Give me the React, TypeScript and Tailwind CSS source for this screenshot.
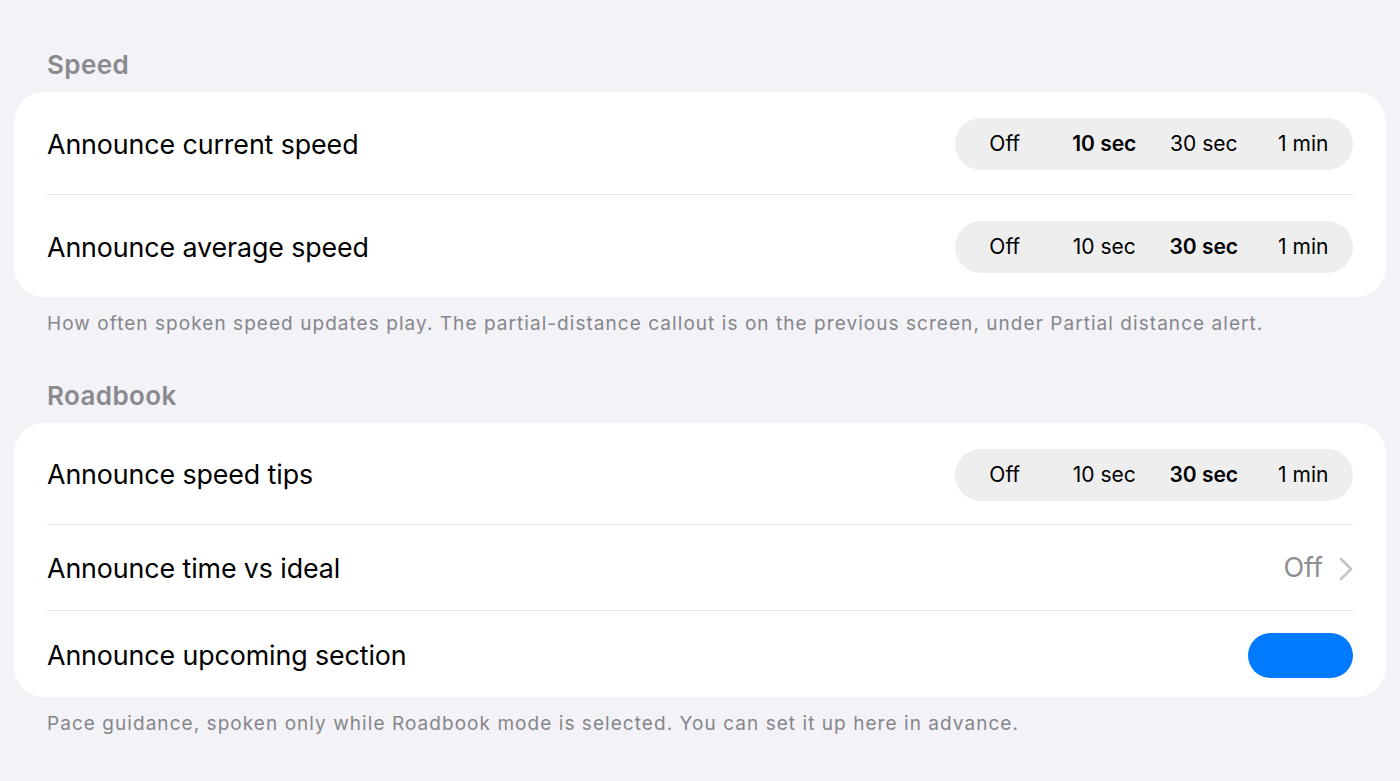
const font = { fontFamily: 'Inter, "Liberation Sans", sans-serif' };

function Segmented({ selected }: { selected: number }) {
    const options = ['Off', '10 sec', '30 sec', '1 min'];
    return (
        <div className="flex w-[398px] h-[52px] rounded-full bg-[#eeeeef] items-center">
            {options.map((o, i) => (
                <div
                    key={o}
                    className={`flex-1 text-center text-[21px] text-black ${i === selected ? 'font-semibold' : 'font-normal'}`}
                >
                    {o}
                </div>
            ))}
        </div>
    );
}

function Row({ label, children, height, last }: { label: string; children: React.ReactNode; height: string; last?: boolean }) {
    return (
        <div className={`flex items-center justify-between pt-[2px] ${height} ${last ? '' : 'border-b border-[#e3e3e6]'}`}>
            <div className="text-[26.8px] text-black tracking-[-0.1px]">{label}</div>
            {children}
        </div>
    );
}

export default function App() {
    return (
        <div className="min-h-[781px] w-full bg-[#f2f2f7] pt-[47px] pb-10" style={font}>
            <div className="px-[47px] text-[26px] font-semibold text-[#8a8a8e] leading-[36px] tracking-[0.4px]">Speed</div>
            <div className="mx-[14px] mt-[9px] rounded-[30px] bg-white px-[33px]">
                <Row label="Announce current speed" height="h-[103px]">
                    <Segmented selected={1} />
                </Row>
                <Row label="Announce average speed" height="h-[102px]" last>
                    <Segmented selected={2} />
                </Row>
            </div>
            <div className="px-[47px] mt-[15px] text-[19px] text-[#86868b] leading-[24px] tracking-[1.05px]">
                How often spoken speed updates play. The partial-distance callout is on the previous screen, under Partial distance alert.
            </div>

            <div className="px-[47px] mt-[42px] text-[26px] font-semibold text-[#8a8a8e] leading-[36px] tracking-[0.4px]">Roadbook</div>
            <div className="mx-[14px] mt-[9px] rounded-[30px] bg-white px-[33px]">
                <Row label="Announce speed tips" height="h-[102px]">
                    <Segmented selected={2} />
                </Row>
                <Row label="Announce time vs ideal" height="h-[86px]">
                    <div className="flex items-center gap-[16px]">
                        <span className="text-[27px] text-[#8e8e93]">Off</span>
                        <svg width="14" height="24" viewBox="0 0 14 24" fill="none">
                            <polyline points="2,2 12,12 2,22" stroke="#c4c4c7" strokeWidth="2.6" strokeLinecap="round" strokeLinejoin="round" />
                        </svg>
                    </div>
                </Row>
                <Row label="Announce upcoming section" height="h-[86px]" last>
                    <div className="w-[105px] h-[45px] rounded-full bg-[#007aff]" />
                </Row>
            </div>
            <div className="px-[47px] mt-[15px] text-[19px] text-[#86868b] leading-[24px] tracking-[1.05px]">
                Pace guidance, spoken only while Roadbook mode is selected. You can set it up here in advance.
            </div>
        </div>
    );
}
